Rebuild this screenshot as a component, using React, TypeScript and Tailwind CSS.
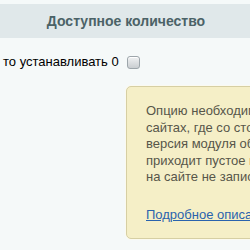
export default function App() {
  return (
    <div className="w-[250px] h-[250px] overflow-hidden bg-[#f5f9f9] pt-[4px] font-['Liberation_Sans',Arial,sans-serif] text-[13px]">
      <div className="h-[34px] bg-[#e0e8ea] flex items-center justify-center pl-[2px] text-[14px] font-bold text-[#4b6267]">
        Доступное количество
      </div>

      <div className="mt-[17px] h-[14px] flex items-center pl-[3px] text-[#000000]">
        <span className="whitespace-nowrap">то устанавливать 0</span>
        <span className="ml-[8px] w-[13px] h-[13px] shrink-0 rounded-[3px] border border-[#9da6ab] bg-gradient-to-b from-[#f0f2f3] to-[#c9ced1] shadow-[inset_0_1px_0_#ffffff]" />
      </div>

      <div className="ml-[126px] mt-[17px] w-[300px] rounded-[5px] border border-[#d6cfa3] bg-[#f5efc7] shadow-[0_0_0_1px_#fbfaf0] pl-[19px] pt-[16px] pb-[15px] text-[#57564a] leading-[16.5px]">
        <p className="whitespace-nowrap">
          Опцию необходимо включать только на
          <br />
          сайтах, где со стороны 1С используется
          <br />
          версия модуля обмена, в которой
          <br />
          приходит пустое количество, если остаток
          <br />
          на сайте не записывается.
        </p>
        <p className="mt-[21px] whitespace-nowrap">
          <a href="#" className="text-[#2a63ad] underline">Подробное описание</a>
        </p>
      </div>
    </div>
  );
}
